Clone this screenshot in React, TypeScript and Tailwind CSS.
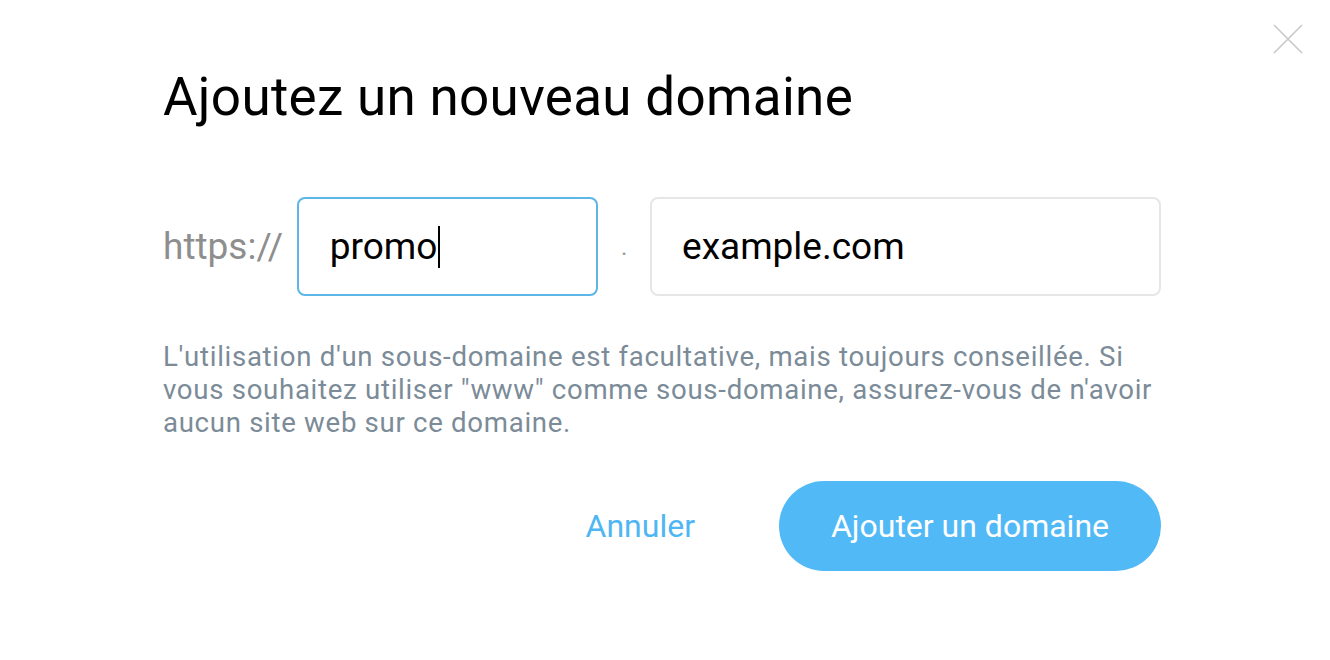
import React from "react";

export default function App() {
  return (
    <div className="relative w-[1330px] h-[660px] bg-white overflow-hidden" style={{ fontFamily: "Roboto, 'Liberation Sans', sans-serif" }}>
      <button className="absolute left-[1272px] top-[23px] w-[32px] h-[32px]">
        <svg width="32" height="32" viewBox="0 0 32 32" fill="none" stroke="#c8c8c8" strokeWidth="1.6">
          <path d="M2 2 L30 30 M30 2 L2 30" />
        </svg>
      </button>
      <div className="pl-[163px] pt-[66px] w-[1161px]">
        <h1 className="text-[53px] leading-[62px] text-black font-normal tracking-[0.3px]">Ajoutez un nouveau domaine</h1>
        <div className="flex items-center mt-[69px]">
          <span className="text-[37px] text-[#8e8e8e] w-[134px]">https://</span>
          <div className="w-[302px] h-[99px] border-2 border-[#5cb6e6] rounded-[8px] flex items-center pl-[31px]">
            <span className="text-[37px] text-black">promo</span>
            <span className="w-[2px] h-[42px] bg-black ml-[1px]"></span>
          </div>
          <span className="w-[52px] text-center text-[24px] text-[#9a9a9a]">.</span>
          <div className="w-[512px] h-[99px] border-2 border-[#e6e6e6] rounded-[8px] flex items-center pl-[30px]">
            <span className="text-[37px] text-black">example.com</span>
          </div>
        </div>
        <p className="mt-[44px] text-[27.6px] leading-[33px] text-[#7b8b98] tracking-[0.7px] w-[998px]">
          L'utilisation d'un sous-domaine est facultative, mais toujours conseillée. Si vous souhaitez utiliser "www" comme sous-domaine, assurez-vous de n'avoir aucun site web sur ce domaine.
        </p>
        <div className="flex justify-end items-center mt-[42px]">
          <button className="text-[32px] text-[#4fb6f3] mr-[84px]">Annuler</button>
          <button className="w-[382px] h-[90px] rounded-full bg-[#52b9f7] text-white text-[32px]">Ajouter un domaine</button>
        </div>
      </div>
    </div>
  );
}
